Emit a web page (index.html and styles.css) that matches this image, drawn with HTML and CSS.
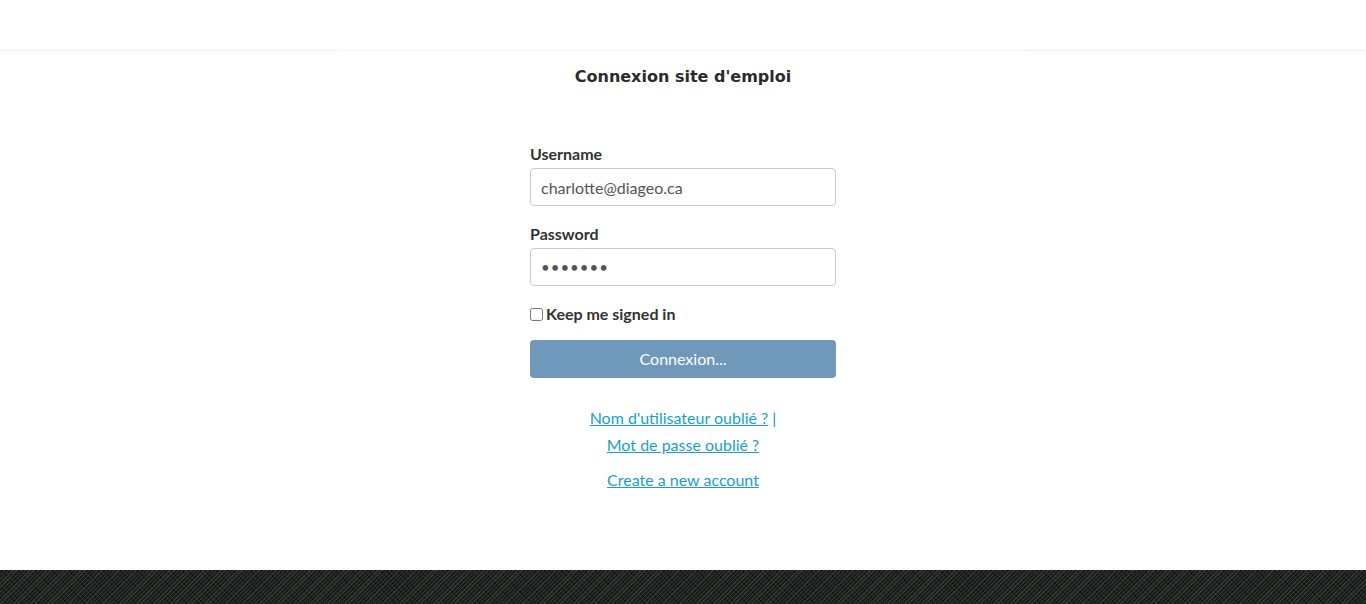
FILE: index.html
```html
<!DOCTYPE html>
<html>
<head>
<meta charset="utf-8">
<link rel="stylesheet" href="styles.css">
</head>
<body>
<div class="page">
  <header class="topbar"></header>
  <h1 class="title">Connexion site d'emploi</h1>
  <main class="login">
    <form class="form">
      <label class="label" for="user">Username</label>
      <input class="input" id="user" type="text" value="charlotte@diageo.ca">
      <label class="label" for="pass">Password</label>
      <input class="input pw" id="pass" type="password" value="1234567">
      <label class="check"><input type="checkbox" class="box"><span>Keep me signed in</span></label>
      <button type="button" class="btn">Connexion...</button>
      <div class="links">
        <div><a href="#">Nom d'utilisateur oublié ?</a> |</div>
        <div><a href="#">Mot de passe oublié ?</a></div>
        <div class="create"><a href="#">Create a new account</a></div>
      </div>
    </form>
  </main>
  <footer class="footer"></footer>
</div>
</body>
</html>
```
FILE: styles.css
```css
* { box-sizing: border-box; }
html, body { margin: 0; padding: 0; background: #fff; }
body { font-family: "Lato", "Open Sans", sans-serif; color: #333; }
.page { min-height: 604px; display: flex; flex-direction: column; }
.topbar {
  height: 51px;
  border-bottom: 1px solid #e8e8e8;
  border-image: repeating-linear-gradient(90deg, #e8e8e8 0 2px, transparent 2px 4px) 1;
}
.title {
  margin: 15px 0 0;
  text-align: center;
  font-family: "DejaVu Sans", Verdana, sans-serif;
  font-weight: bold;
  font-size: 16px;
  line-height: 22px;
  color: #2b2b2b;
}
.login { display: flex; justify-content: center; flex: 1; }
.form { width: 306px; display: flex; flex-direction: column; margin-top: 57px; }
.label { font-weight: bold; font-size: 16px; line-height: 18px; margin-bottom: 5px; color: #333; }
.input {
  height: 38px;
  border: 1px solid #ccc;
  border-radius: 4px;
  padding: 0 10px;
  font-family: "Lato", sans-serif;
  font-size: 16px;
  color: #555;
  margin-bottom: 19px;
  outline: none;
}
.pw { letter-spacing: 1px; margin-bottom: 19px; font-size: 15px; }
.check { display: flex; align-items: center; font-weight: bold; font-size: 16px; line-height: 18px; }
.box { margin: 0 3px 0 0; width: 13px; height: 13px; }
.btn {
  margin-top: 17px;
  height: 38px;
  padding: 0 0 2px;
  border: none;
  border-radius: 4px;
  background: #7099b9;
  color: #fff;
  font-family: "Lato", sans-serif;
  font-size: 16px;
}
.links { margin-top: 26px; text-align: center; font-size: 16px; line-height: 27px; color: #1a8fc4; }
.links a { color: #1a9fcc; }
.create { margin-top: 8px; }
.footer {
  height: 34px;
  background-color: #1e211f;
  background-image:
    repeating-linear-gradient(135deg, rgba(60,66,62,0.7) 0 1px, transparent 1px 3px),
    repeating-linear-gradient(45deg, rgba(10,12,11,0.6) 0 1px, transparent 1px 4px);
}
```
